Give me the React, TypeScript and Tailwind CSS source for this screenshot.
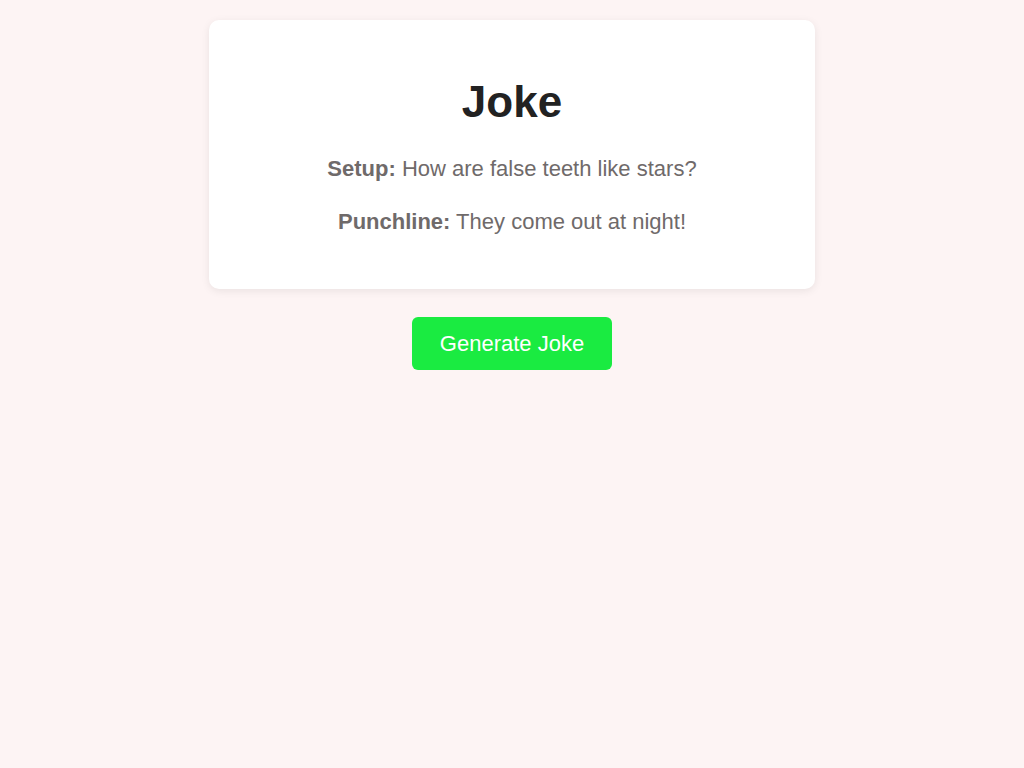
export default function App() {
  return (
    <div className="min-h-screen bg-[#fdf4f4] font-['Liberation_Sans',Arial,sans-serif]">
      <div className="flex flex-col items-center pt-[20px]">
        {/* Joke card */}
        <div className="w-[606px] rounded-[10px] bg-white pt-[55px] pb-[51px] text-center shadow-[0_2px_8px_rgba(0,0,0,0.08)]">
          <h1 className="text-[44px] leading-[53px] font-bold text-[#222222]">Joke</h1>
          <p className="mt-[24px] text-[22px] leading-[33px] text-[#6f6a6a]">
            <span className="font-bold">Setup:</span> How are false teeth like stars?
          </p>
          <p className="mt-[20px] text-[22px] leading-[33px] text-[#6f6a6a]">
            <span className="font-bold">Punchline:</span> They come out at night!
          </p>
        </div>

        <button className="mt-[28px] h-[53px] rounded-[6px] bg-[#1aeb41] px-[28px] text-[22px] text-white">
          Generate Joke
        </button>
      </div>
    </div>
  );
}
